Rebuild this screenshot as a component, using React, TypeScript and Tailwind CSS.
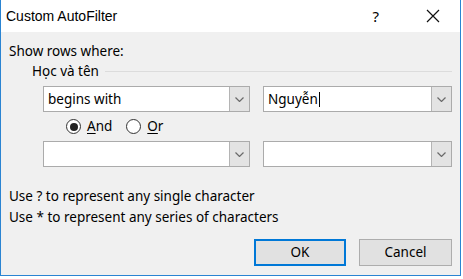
import React from "react";

const font = { fontFamily: '"Noto Sans", "Open Sans", sans-serif' };
const titleFont = { fontFamily: '"Liberation Sans", Arial, sans-serif' };

function Chevron() {
  return (
    <svg width="9" height="5" viewBox="0 0 9 5" className="block">
      <path d="M0.5 0.5 L4.5 4.5 L8.5 0.5" fill="none" stroke="#6a6a6a" strokeWidth="1.2" />
    </svg>
  );
}

function Combo({ width, children }: { width: string; children?: React.ReactNode }) {
  return (
    <div className={`${width} h-[26px] flex border border-[#ababab] bg-white`}>
      <div className="flex-1 flex items-center pl-[4px] text-[13.5px] text-black">{children}</div>
      <div className="w-[20px] h-full flex items-center justify-center bg-[#e3e3e3] border-l border-[#b4b4b4]">
        <Chevron />
      </div>
    </div>
  );
}

function Radio({ checked, label, underlined }: { checked?: boolean; label: string; underlined: string }) {
  return (
    <div className="flex items-center gap-[6px]">
      <div className="w-[15px] h-[15px] rounded-full border border-[#333] bg-white flex items-center justify-center">
        {checked && <div className="w-[8px] h-[8px] rounded-full bg-[#222]" />}
      </div>
      <span className="text-[13.5px] text-black">
        <span className="underline underline-offset-2">{underlined}</span>
        {label}
      </span>
    </div>
  );
}

export default function App() {
  return (
    <div className="w-[463px] h-[279px] bg-white" style={font}>
      <div className="w-[461px] h-[276px] flex flex-col border-l border-r border-b border-[#2a84d2]">
        <div className="h-[32px] flex items-center bg-white pl-[5px] text-black">
          <span className="text-[14px]" style={titleFont}>Custom AutoFilter</span>
          <span className="ml-auto mr-[47px] text-[15px]">?</span>
          <svg width="14" height="14" viewBox="0 0 14 14" className="mr-[20px]">
            <path d="M1 1 L13 13 M13 1 L1 13" stroke="#111" strokeWidth="1.2" />
          </svg>
        </div>
        <div className="flex-1 bg-[#f0f0f0] pl-[8px] pr-[8px] text-[13.5px] text-black">
          <div className="mt-[10px] h-[19px] leading-[19px]">Show rows where:</div>
          <div className="flex items-center h-[20px] pl-[23px]">
            <span>Học và tên</span>
            <div className="flex-1 ml-[6px] h-px bg-[#dcdcdc]" />
          </div>
          <div className="flex gap-[13px] pl-[34px] mt-[5px]">
            <Combo width="w-[207px]">begins with</Combo>
            <Combo width="w-[189px]">
              <span>Nguyễn</span>
              <span className="w-px h-[15px] bg-black ml-[1px]" />
            </Combo>
          </div>
          <div className="flex items-center gap-[14px] pl-[57px] h-[29px]">
            <Radio checked underlined="A" label="nd" />
            <Radio underlined="O" label="r" />
          </div>
          <div className="flex gap-[13px] pl-[34px]">
            <Combo width="w-[207px]" />
            <Combo width="w-[189px]" />
          </div>
          <div className="mt-[19px] leading-[21px]">Use ? to represent any single character</div>
          <div className="leading-[21px]">Use * to represent any series of characters</div>
          <div className="flex justify-end gap-[13px] mt-[11px]">
            <button className="w-[92px] h-[27px] bg-[#e1e1e1] border-2 border-[#0078d7] text-[13.5px]">OK</button>
            <button className="w-[93px] h-[27px] bg-[#e1e1e1] border border-[#adadad] text-[13.5px]">Cancel</button>
          </div>
        </div>
      </div>
    </div>
  );
}
